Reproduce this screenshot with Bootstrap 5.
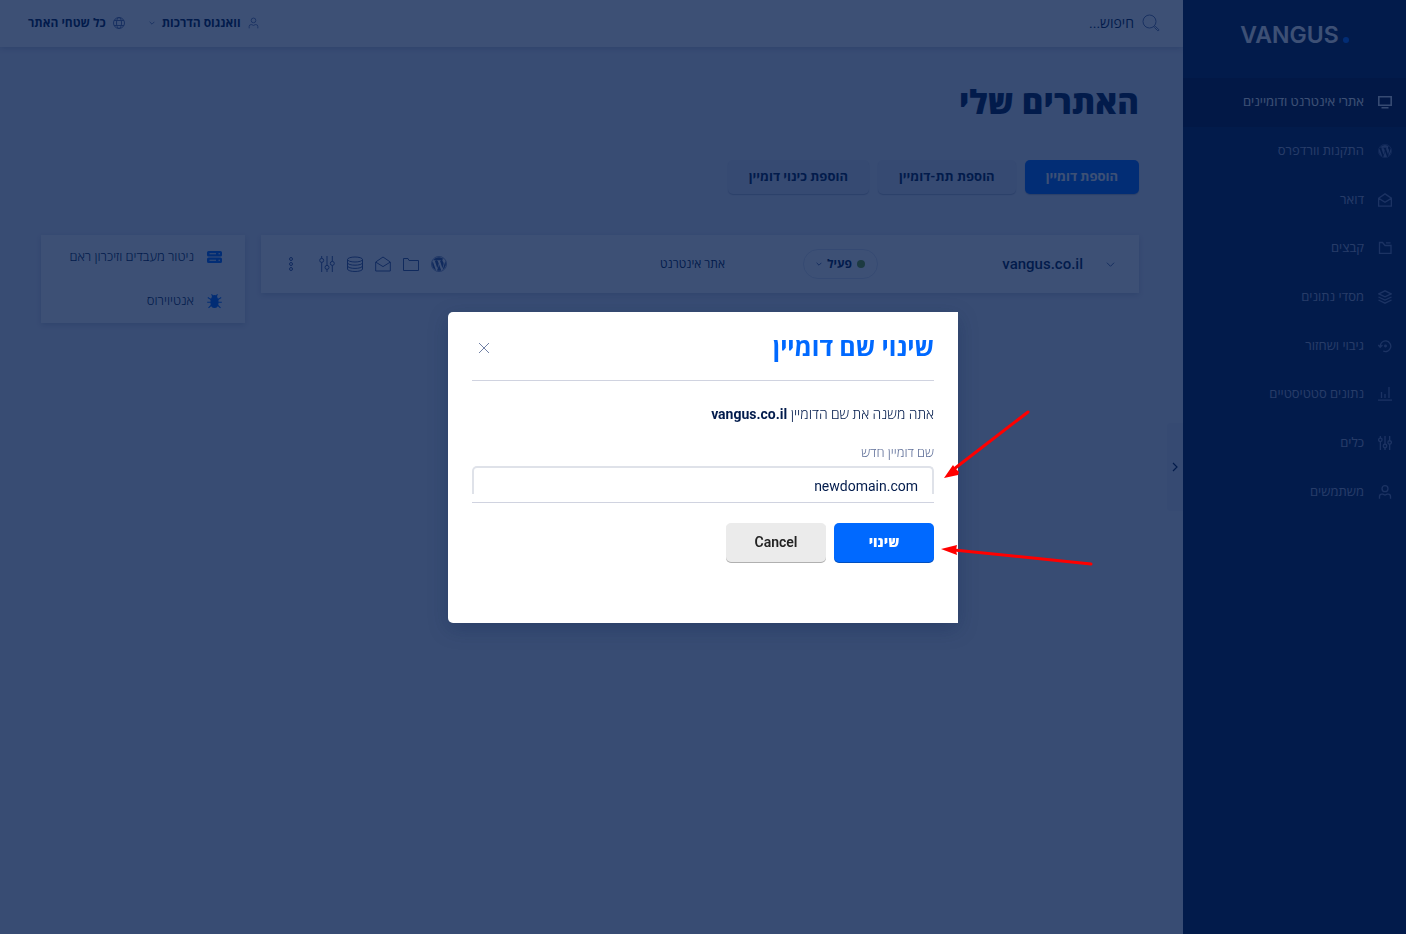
<!DOCTYPE html>
<html lang="he" dir="rtl">
<head>
<meta charset="utf-8">
<meta name="viewport" content="width=device-width, initial-scale=1">
<title>Vangus</title>
<link href="https://cdn.jsdelivr.net/npm/bootstrap@5.3.0/dist/css/bootstrap.min.css" rel="stylesheet">
<style>
:root{--navy:#021b4c;--blue:#0069ff}
body{font-family:Roboto,"Open Sans","Liberation Sans",sans-serif;font-size:14px;line-height:20px;color:var(--navy);background:#e8ebf5}
svg{fill:none;display:block;flex-shrink:0}
svg:not([stroke]){stroke:currentColor}
a{color:inherit;text-decoration:none}
/* sidebar */
.side{width:223px;background:var(--navy)}
.brand-row{height:78px;padding:23px 57px 0}
.brand-name{font-family:Inter,sans-serif;font-size:23px;line-height:24px;font-weight:600;color:#fff}
.brand-dot{width:6px;height:6px;border-radius:50%;background:var(--blue);margin-bottom:4px}
.side-nav{height:438px}
.side-link{padding:0 14px;gap:14px;color:#9ea8c8;font-size:13px;font-weight:500}
.side-link.on{background:#000f36;color:#fff}
.side-link svg{color:#6f80b0}
.side-link.on svg{color:#e0e5f2}
/* top bar */
.topbar{height:47px;background:#fff;padding:0 23px 2px 28px;box-shadow:0 1px 6px rgba(2,27,76,.2);font-size:12px}
.topbar a{gap:7px}
.topbar svg{color:#5f75a8}
.search{border:0;background:none;width:120px;padding:0;font-size:14px;color:var(--navy)}
.search::placeholder{color:var(--navy);opacity:1}
/* content */
.content{padding:34px 44px 0 41px}
.page-title{font-size:33px;line-height:44px;font-weight:800;margin:0 0 35px}
.acts{gap:9px;margin-bottom:41px}
.act{height:34px;padding:0 21px;border:0;border-radius:5px;font-size:13px;font-weight:700;line-height:32px;background:#dfe3f0;box-shadow:0 1px 1px rgba(2,27,76,.25);color:var(--navy)}
.act.main{background:var(--blue);color:#fff}
.panel{background:#fff;box-shadow:0 2px 5px rgba(2,27,76,.15)}
.site-row{height:58px;padding:0 24px 0 26px}
.site-row svg{color:#3f5a98}
.site-name{font-size:15px;font-weight:500;width:205px;margin-right:23px}
.pill{height:30px;width:75px;border:1px solid #dde2f0;border-radius:15px;background:none;padding:0;gap:5px;font-size:12px;font-weight:700;color:var(--navy)}
.dot{width:8px;height:8px;border-radius:50%;background:#6fa01e}
.kind{font-size:12px;margin-right:78px}
.row-icons{gap:12px}
.more{margin-right:12px}
.tools-panel{width:204px;font-size:13px;font-weight:300}
.tools-panel a{height:44px;padding:0 23px;gap:13px}
.tools-panel svg{color:var(--blue)}
.handle{right:0;width:16px;height:88px;border:0;padding:0;background:#dfe3f1;border-radius:4px 0 0 4px;color:var(--navy)}
/* dialog */
.shade{--bs-backdrop-bg:#021b4c;--bs-backdrop-opacity:.77}
.dialog{--bs-modal-width:510px}
.dialog .modal-content{border:0;border-radius:5px 0 0 5px;padding:0 24px 60px;color:var(--navy);box-shadow:0 6px 20px rgba(2,27,76,.25)}
.dialog .modal-header{height:69px;padding:4px 0 0;border-bottom:1px solid #d0d3e0;border-radius:0}
.dialog h2{font-size:25px;line-height:32px;font-weight:700;color:var(--blue)}
.x-btn{border:0;background:none;padding:0 7px;color:#7181a6}
.dialog .modal-body{padding:23px 0 0}
.domain-field{border:2px solid #dfe2e9;border-bottom:0;border-radius:5px 5px 0 0;height:28px;padding:10px 14px 0;font-size:14px;line-height:16px;color:var(--navy)}
.field-wrap{border-bottom:1px solid #d0d3e0;padding-bottom:8px;margin-bottom:20px}
.field-label{font-size:13px;line-height:18px;font-weight:300;color:#61719a;margin:20px 0 4px}
.go{width:100px;height:40px;border:0;border-radius:5px;font-size:14px;font-weight:500;padding:0 0 2px;box-shadow:inset 0 -1px 0 rgba(0,0,0,.25)}
.go.yes{background:var(--blue);color:#fff;font-weight:800}
.go.no{background:#ebebeb;color:#222;font-weight:600}
.arrows{left:492px;top:93px;pointer-events:none}
</style>
</head>
<body>
<svg class="d-none">
<symbol id="wp" viewBox="0 0 16 16"><circle cx="8" cy="8" r="7.600" stroke-width=".6"/><path fill="currentColor" stroke="none" d="M12.633 7.653c0-.848-.305-1.435-.566-1.892l-.08-.13c-.317-.51-.594-.958-.594-1.480 0-.63.478-1.218 1.152-1.218q.03 0 .058.003l.031.003A6.840 6.840 0 0 0 8 1.137 6.860 6.860 0 0 0 2.266 4.230c.16.005.313.009.442.009.717 0 1.828-.087 1.828-.087.37-.022.414.521.044.565 0 0-.371.044-.785.065l2.500 7.434 1.500-4.506-1.070-2.929c-.369-.022-.719-.065-.719-.065-.37-.022-.326-.588.043-.566 0 0 1.134.087 1.808.087.718 0 1.830-.087 1.830-.087.37-.022.413.522.043.566 0 0-.372.043-.785.065l2.480 7.377.684-2.287.054-.173c.27-.86.469-1.495.469-2.046zM1.137 8a6.860 6.860 0 0 0 3.868 6.176L1.730 5.206A6.800 6.800 0 0 0 1.137 8zM6.061 14.583 8.120 8.600l2.109 5.780q.02.05.049.094a6.850 6.850 0 0 1-4.218.109zm7.960-9.876q.046.328.047.706c0 .696-.13 1.479-.522 2.458l-2.096 6.060a6.860 6.860 0 0 0 2.572-9.224z"/></symbol>
<symbol id="mail" viewBox="0 0 16 16"><path d="M.7 6 8 1l7.300 5v9H.7zM.9 6.200 8 10.600l7.100-4.400"/></symbol>
<symbol id="sliders" viewBox="0 0 16 16"><path d="M2.700 0v2.400M2.700 6.400V16M8 0v9.400M8 13.400V16M13.300 0v5.400M13.300 9.400V16"/><circle cx="2.700" cy="4.400" r="2"/><circle cx="8" cy="11.400" r="2"/><circle cx="13.300" cy="7.400" r="2"/></symbol>
<symbol id="user" viewBox="0 0 16 16"><circle cx="8" cy="4.200" r="3.400"/><path d="M1.700 15.800V13q0-2.600 2.600-2.600h1.200L8 11.500l2.500-1.100h1.200q2.600 0 2.600 2.600v2.800"/></symbol>
<symbol id="down" viewBox="0 0 10 10"><path d="m1 3 4 4 4-4"/></symbol>
</svg>
<div class="d-flex min-vh-100">
<aside class="side flex-shrink-0">
<div class="brand-row"><a href="#" class="d-flex align-items-end justify-content-center gap-1" dir="ltr"><span class="brand-name">VANGUS</span><span class="brand-dot flex-shrink-0"></span></a></div>
<nav class="side-nav d-flex flex-column">
<a href="#" class="side-link on d-flex flex-fill align-items-center"><svg width="14" height="14" viewBox="0 0 14 14" stroke-width="1.600"><path d="M.8 1.800h12.400v8.400H.8zM3.500 12.700h7"/></svg><span>אתרי אינטרנט ודומיינים</span></a>
<a href="#" class="side-link d-flex flex-fill align-items-center"><svg width="14" height="14"><use href="#wp"/></svg><span>התקנות וורדפרס</span></a>
<a href="#" class="side-link d-flex flex-fill align-items-center"><svg width="14" height="14" stroke-width="1.500"><use href="#mail"/></svg><span>דואר</span></a>
<a href="#" class="side-link d-flex flex-fill align-items-center"><svg width="14" height="14" viewBox="0 0 14 14" stroke-width="1.300"><path d="M1.500 1.500h3l2.500 3h6v7.800H1.500zM8 1.800h4.500"/></svg><span>קבצים</span></a>
<a href="#" class="side-link d-flex flex-fill align-items-center"><svg width="14" height="14" viewBox="0 0 14 14" stroke-width="1.300"><path d="m.8 3.800 6.200-3 6.200 3L7 6.800zM.5 7 7 10.100 13.500 7M.5 10 7 13.200l6.500-3.200"/></svg><span>מסדי נתונים</span></a>
<a href="#" class="side-link d-flex flex-fill align-items-center"><svg width="14" height="14" viewBox="0 0 14 14" stroke-width="1.300"><path d="M2.200 7.500a5.300 5.300 0 1 1 3 4.500M.3 6l1.900 2.200L4.400 6"/><circle cx="7.500" cy="7" r=".8" fill="currentColor"/></svg><span>גיבוי ושחזור</span></a>
<a href="#" class="side-link d-flex flex-fill align-items-center"><svg width="14" height="14" viewBox="0 0 14 14" stroke-width="1.300"><path d="M3.500 5v6M7 7v4M11 0v11M0 13.200h14"/></svg><span>נתונים סטטיסטיים</span></a>
<a href="#" class="side-link d-flex flex-fill align-items-center"><svg width="14" height="14" stroke-width="1.500"><use href="#sliders"/></svg><span>כלים</span></a>
<a href="#" class="side-link d-flex flex-fill align-items-center"><svg width="14" height="14" stroke-width="1.500"><use href="#user"/></svg><span>משתמשים</span></a>
</nav>
</aside>
<div class="flex-grow-1 position-relative">
<header class="topbar d-flex align-items-center">
<label class="d-flex align-items-center gap-2"><svg width="18" height="18" viewBox="0 0 18 18"><circle cx="7.500" cy="7.500" r="6.500"/><path d="m12.300 13.300 1-1 3.600 3.400q.3 1-1.100 1.100z"/></svg><input class="search" type="search" placeholder="חיפוש..." aria-label="חיפוש"></label>
<a href="#" class="me-auto d-flex align-items-center fw-bold"><svg width="11" height="12" stroke-width="1.300"><use href="#user"/></svg><span>וואנגוס הדרכות</span><svg width="6" height="6" stroke-width="1.500"><use href="#down"/></svg></a>
<a href="#" class="d-flex align-items-center fw-bold"><svg class="me-4" width="12" height="12" viewBox="0 0 12 12"><circle cx="6" cy="6" r="5.500"/><ellipse cx="6" cy="6" rx="2.500" ry="5.500"/><path d="M1 3.500h10M1 8.500h10"/></svg><span>כל שטחי האתר</span></a>
</header>
<main class="content">
<h1 class="page-title">האתרים שלי</h1>
<div class="acts d-flex">
<button class="act main">הוספת דומיין</button><button class="act">הוספת תת-דומיין</button><button class="act">הוספת כינוי דומיין</button>
</div>
<div class="d-flex align-items-start gap-3">
<section class="panel site-row flex-grow-1 d-flex align-items-center">
<svg width="9" height="9"><use href="#down"/></svg>
<a href="#" class="site-name"><bdi>vangus.co.il</bdi></a>
<button class="pill d-flex align-items-center justify-content-center"><span class="dot"></span><span>פעיל</span><svg width="6" height="6" stroke-width="1.500"><use href="#down"/></svg></button>
<span class="kind">אתר אינטרנט</span>
<div class="row-icons d-flex align-items-center me-auto">
<a href="#" aria-label="WordPress"><svg width="16" height="16"><use href="#wp"/></svg></a>
<a href="#" aria-label="קבצים"><svg width="16" height="16" viewBox="0 0 16 16"><path d="M.5 14.500v-12h4.500l1 2h9.500v10z"/></svg></a>
<a href="#" aria-label="דואר"><svg width="16" height="16"><use href="#mail"/></svg></a>
<a href="#" aria-label="מסדי נתונים"><svg width="16" height="16" viewBox="0 0 16 16"><ellipse cx="8" cy="3.500" rx="7.500" ry="2.500"/><path d="M.5 3.500v9.500c0 3.300 15 3.300 15 0V3.500M.5 6.700c0 3.300 15 3.300 15 0M.5 9.900c0 3.300 15 3.300 15 0"/></svg></a>
<a href="#" aria-label="כלים"><svg width="16" height="16"><use href="#sliders"/></svg></a>
<a href="#" class="more" aria-label="עוד"><svg width="8" height="16" viewBox="0 0 8 16"><circle cx="4" cy="3" r="1.500"/><circle cx="4" cy="8" r="1.500"/><circle cx="4" cy="13" r="1.500"/></svg></a>
</div>
</section>
<aside class="panel tools-panel">
<a href="#" class="d-flex align-items-center"><svg width="15" height="12" viewBox="0 0 15 12" stroke="none"><path fill="currentColor" fill-rule="evenodd" d="M1.500 0h12Q15 0 15 1.500v2.600q0 1.500-1.500 1.500h-12Q0 5.600 0 4.100V1.500Q0 0 1.500 0zM2.500 2.300v1h6.500v-1zM11.500 2.300v1h1.500v-1zM1.500 6.400h12q1.500 0 1.500 1.500v2.600q0 1.500-1.500 1.500h-12Q0 12 0 10.500V7.900q0-1.500 1.500-1.500zM2.500 8.700v1h6.500v-1zM11.500 8.700v1h1.500v-1z"/></svg><span>ניטור מעבדים וזיכרון ראם</span></a>
<a href="#" class="d-flex align-items-center"><svg width="15" height="15" viewBox="0 0 15 15" stroke-width="1.100"><path fill="currentColor" stroke="none" d="M4.500 4q0-3 3-3t3 3v.3h1v5q0 4.700-4 4.700t-4-4.700v-5h1z"/><path d="M4.500.3 6 2.300M10.500.3 9 2.300M.8 3.500 4 5.600M14.200 3.500 11 5.600M.2 8.200h14.600M1.500 13.800 4.500 11M13.500 13.800l-3-2.800"/></svg><span>אנטיוירוס</span></a>
</aside>
</div>
</main>
<button class="handle position-absolute top-50 translate-middle-y" aria-label="הסתרת התפריט"><svg class="m-auto" width="8" height="10" viewBox="0 0 8 10" stroke-width="1.200"><path d="m2 1 4 4-4 4"/></svg></button>
</div>
</div>
<div class="modal-backdrop shade show"></div>
<div class="modal show d-block" role="dialog" aria-modal="true" aria-labelledby="dlg-title">
<div class="modal-dialog modal-dialog-centered dialog">
<form class="modal-content position-relative">
<div class="modal-header d-flex justify-content-between align-items-center">
<h2 id="dlg-title" class="m-0">שינוי שם דומיין</h2>
<button type="button" class="x-btn" aria-label="סגירה"><svg width="10" height="10" viewBox="0 0 10 10"><path d="m0 0 10 10M10 0 0 10"/></svg></button>
</div>
<div class="modal-body">
<p class="m-0 fw-light">אתה משנה את שם הדומיין <b class="fw-bold">vangus.co.il</b></p>
<label class="field-label d-block" for="domain">שם דומיין חדש</label>
<div class="field-wrap"><input id="domain" class="domain-field d-block w-100" type="text" value="newdomain.com"></div>
<div class="d-flex gap-2"><button type="button" class="go yes">שינוי</button><button type="button" class="go no">Cancel</button></div>
</div>
<svg class="arrows position-absolute" width="156" height="164" viewBox="0 0 156 164" stroke="#f00" stroke-width="3" stroke-linecap="round"><path d="M88 7 14 64M151 159 14 145"/><path fill="#f00" stroke="none" d="m4 73 9-13 2 3 4 4-1 3zM1 144l16-4-1 5 1 5z"/></svg>
</form>
</div>
</div>
<script src="https://cdn.jsdelivr.net/npm/bootstrap@5.3.0/dist/js/bootstrap.bundle.min.js"></script>
</body>
</html>
